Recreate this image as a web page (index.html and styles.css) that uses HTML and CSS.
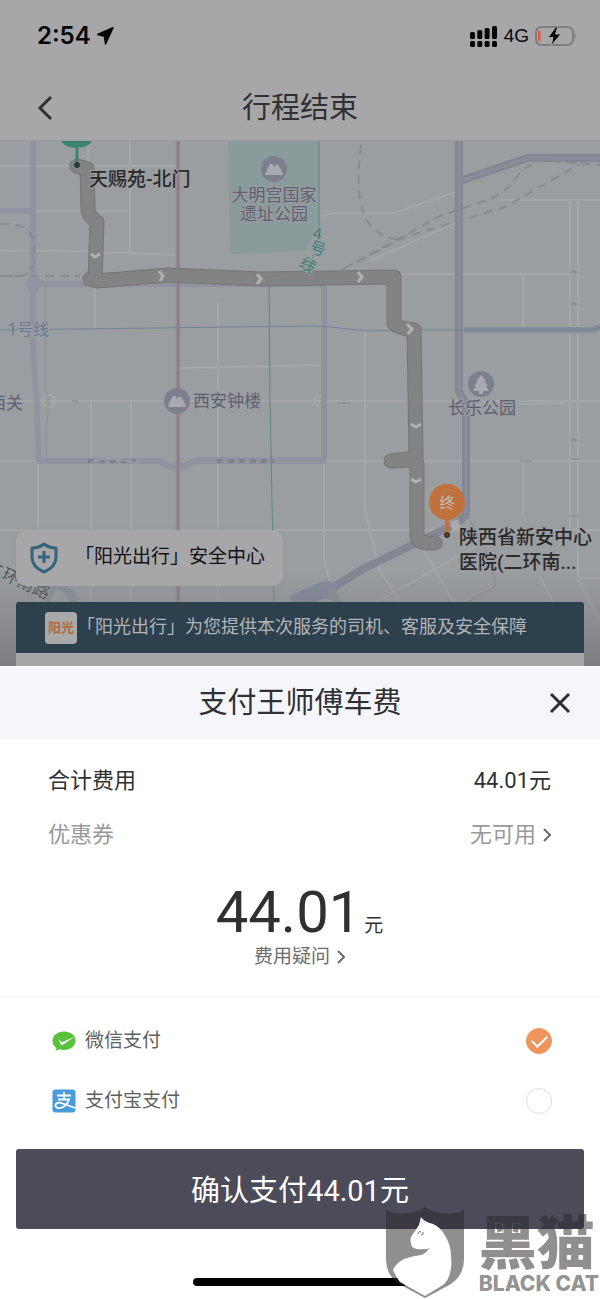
FILE: index.html
```html
<!DOCTYPE html>
<html lang="zh-CN">
<head>
<meta charset="utf-8">
<meta name="viewport" content="width=device-width, initial-scale=1">
<title>行程结束</title>
<link rel="stylesheet" href="styles.css">
</head>
<body>
<div class="screen">
  <header class="top">
    <div class="status">
      <div class="status-side">
        <span class="clock">2:54</span>
        <svg width="17" height="18" viewBox="0 0 17 18" aria-hidden="true"><path d="M16 .700 8.500 17 7.500 9.300.700 7.500Z" fill="#050506" stroke="#050506" stroke-width="1.500" stroke-linejoin="round"/></svg>
      </div>
      <div class="status-side">
        <svg width="28" height="21" viewBox="0 0 28 21" aria-hidden="true" fill="#050506"><rect x="0" y="6" width="5" height="7" rx="1.500"/><rect x="7.300" y="4" width="5" height="9" rx="1.500"/><rect x="14.600" y="2" width="5" height="11" rx="1.500"/><rect x="22" y="0" width="5" height="13" rx="1.500"/><rect x="0" y="15" width="5" height="6" rx="1.500"/><rect x="7.300" y="15" width="5" height="6" rx="1.500"/><rect x="14.600" y="15" width="5" height="6" rx="1.500"/><rect x="22" y="15" width="5" height="6" rx="1.500"/></svg>
        <span class="network">4G</span>
        <svg width="42" height="20" viewBox="0 0 42 20" aria-hidden="true"><rect x="1" y="1" width="37" height="18" rx="5" fill="none" stroke="#727275" stroke-width="1.500"/><path d="M39.500 7q2.500 3 0 6Z" fill="#727275"/><rect x="3" y="4.500" width="2.500" height="11" rx="1" fill="#e2573f"/><path d="M21.500 0 13 11.500h5L16 20l10-12h-5.500L23 0Z" fill="#050506" stroke="#a7a7a9" stroke-width="1"/></svg>
      </div>
    </div>
    <div class="nav">
      <button class="icon-button back" type="button" aria-label="返回"><svg width="16" height="26" viewBox="0 0 16 26"><path d="M14 2 3 13l11 11" fill="none" stroke="#303033" stroke-width="3"/></svg></button>
      <h1 class="title">行程结束</h1>
    </div>
  </header>

  <main class="map">
    <svg class="map-canvas" viewBox="0 140 600 525" preserveAspectRatio="xMidYMin slice" role="img" aria-label="行程路线地图">
      <defs>
        <linearGradient id="fade" x1="0" y1="0" x2="0" y2="1"><stop offset="0" stop-color="#7c7d81" stop-opacity="0"/><stop offset="1" stop-color="#7c7d81"/></linearGradient>
      </defs>
      <rect y="140" width="600" height="525" fill="#9b9ea1"/>
      <path d="M228 140h91v85l-14 25-75 3Z" fill="#8a9b9c"/>
      <g class="road-minor">
        <path d="M88 140v26M130 140v115M0 165h178M35 210h93M0 250q35-2 178 4M95 285v43M180 367l143-3M0 400h600M0 460h40M280 460h320M0 529h600M38 460v140M91 400v200M131 400v200M218 300v300M324 460v100l12 40M365 330v180l15 60 20 30M322 215l10-3h62l65-22M500 199h100M570 199v330M578 199v380l22 40M400 273h170M523 273v55M523 460v55M466 404l100-2M370 605l120-68M424 550l35 60M540 575l15 30M580 577h20M370 260l90-40"/>
        <circle cx="49" cy="400" r="6"/><circle cx="319" cy="400" r="5"/><path d="M218 370v-8M91 460v-12"/>
      </g>
      <path d="M570 271h9M570 303h9M570 439h9M570 458h9M570 515h9M338 402h12M520 460h12M72 400h6" stroke="#818388" stroke-width="1"/>
      <g class="road-major">
        <path d="M33 140v138q-2 60 3 112l3 70h120l14 7h8l14-7h129V283H36"/>
        <path d="M0 210h34"/>
      </g>
      <circle cx="33" cy="283" r="8" fill="#9295a1"/>
      <path d="M178 140v460" class="red-bed"/><circle cx="178" cy="466" r="5" fill="none" stroke="#9092a0" stroke-width="2"/>
      <path d="M178 140v460" class="red-line"/>
      <g class="ring"><path d="M45 283v105l3 8v18l-2 10v34h115l12 7h9l14-8h129V283"/><path d="M88 460h48M217 460h57" class="hatch"/></g>
      <path d="M90 462q12-8 48 0" fill="none" stroke="#a5a7ab"/>
      <g class="expressway">
        <path d="M460 180l68-23h72M459 140v250l7 14v108q-2 8-25 18l-78 38-75 46"/>
      </g>
      <path d="M318 582q8-4 20 1l-2 15h-14q-22 4-34 12l3-16Z" fill="#858a9b"/>
      <path d="M330 588l12 20M45 600l12-20 20 20" fill="none" stroke="#8b909b" stroke-width="8"/>
      <path d="M459 140v250l7 14v108M460 180l68-23h72" class="expressway-core"/>
      <path d="M466 512l20 38 9 30v6l-45 24" fill="none" stroke="#8a8598"/>
      <g class="rail">
        <path d="M0 223h10q22 2 24 20v20q-4 10-12 12H0M0 275h80"/>
        <path d="M361 144q-6 45 3 70 12 24 35 24M330 274q-4 1 15-7l55-30 40-22 53-18 15-10 14-18 18-10 60 5M345 267l60-31 60-18 40-12 75-43"/>
      </g>
      <path class="metro-one" d="M0 329l310-4q18 0 55 5l35-1h192l8-3"/>
      <path d="M464 329h128l8-3" fill="none" stroke="#858c99" stroke-width="6"/>
      <path class="metro-four" d="M319 140v85q-2 40-22 47l-28 13 1 115 4 200"/>
      <path class="metro-one" d="M464 329h128l8-3"/>

      <g class="route-edge"><path d="M77 165l10 3 1 41q2 8 9 12l-2 58"/><path d="M90 278l7 2 71-6 92 4 134-2v46q2 5 20 7l2 127q0 2-8 2l-17 2 22-1 4 4v72q1 8 18 7"/></g>
      <g class="route"><path d="M77 165l10 3 1 41q2 8 9 12l-2 58"/><path d="M90 278l7 2 71-6 92 4 134-2v46q2 5 20 7l2 127q0 2-8 2l-17 2 22-1 4 4v72q1 8 18 7"/></g>
      <g class="arrows"><path d="M91 253l4 3 5-3M159 270l4 5-3 5M257 273l4 5-4 5M358 271l4 5-4 5M407 323l5 5-4 5M411 423l5 3 5-3M411 478l5 3 5-3"/></g>

      <path d="M61 140a16 9 0 0 0 31 0Z" fill="#3b836f"/><path d="M77 147v15" stroke="#3b836f" stroke-width="3"/><circle cx="77" cy="164" r="2.500" fill="#333" stroke="#173f36"/>
      <path d="M450 521l8-3 3 9-8 5Z" fill="#aaa9ab"/>
      <circle cx="447" cy="501" r="18" fill="#bf713e"/><path d="M447 518v14" stroke="#bf713e" stroke-width="4"/><circle cx="447" cy="534" r="2.500" fill="#5b4030" stroke="#30201a"/>
      <text x="447" y="507" class="pin-text">终</text>

      <g fill="#7d7f8d"><circle cx="274" cy="168" r="13"/><circle cx="177" cy="400" r="13"/><circle cx="481" cy="383" r="13"/></g>
      <g fill="#a9aab0"><path d="M265 174q2-7 5-11 3-1 4 3l3-3q4 4 6 11Z"/><path d="M168 406q2-7 5-11 3-1 4 3l3-3q4 4 6 11Z"/><path d="M481 374l5 6h-2l4 5h-2l3 5h-6v3h-4v-3h-6l3-5h-2l4-5h-2Z"/></g>
      <g class="poi">
        <text x="274" y="200" text-anchor="middle">大明宫国家</text><text x="274" y="219" text-anchor="middle">遗址公园</text>
        <text x="193" y="406">西安钟楼</text><text x="482" y="413" text-anchor="middle">长乐公园</text><text x="-11" y="408">西关</text>
      </g>
      <text x="8" y="334" class="line-one">1号线</text>
      <g class="line-four"><text x="313" y="238" transform="rotate(8 318 233)">4</text><text x="310" y="253" transform="rotate(18 317 247)">号</text><text x="300" y="270" transform="rotate(35 308 264)">线</text></g>
      <text x="-15" y="570" transform="rotate(25 -15 570)" class="road-name">二环南路</text>
      <g class="place"><text x="89" y="185">天赐苑-北门</text><text x="459" y="543">陕西省新安中心</text><text x="459" y="568">医院(二环南...</text></g>
      <rect y="570" width="600" height="95" fill="url(#fade)"/>
    </svg>
    <button class="safety" type="button">
      <svg width="28" height="32" viewBox="0 0 28 32" aria-hidden="true"><path d="M14 2q5 4 12 4v9q0 10-12 15Q2 25 2 15V6q7 0 12-4Z" fill="none" stroke="#35637c" stroke-width="3" stroke-linejoin="round"/><path d="M14 9v12M8 15h12" stroke="#35637c" stroke-width="3"/></svg>
      <span>「阳光出行」安全中心</span>
    </button>
    <section class="service">
      <div class="service-bar">
        <span class="brand">阳光</span>
        <span class="service-text">「阳光出行」为您提供本次服务的司机、客服及安全保障</span>
      </div>
      <div class="service-body"></div>
    </section>
  </main>

  <form class="sheet">
    <div class="sheet-head">
      <h2 class="title">支付王师傅车费</h2>
      <button class="icon-button close" type="button" aria-label="关闭"><svg width="22" height="22" viewBox="0 0 22 22"><path d="M2 2l18 18M20 2 2 20" stroke="#303032" stroke-width="3"/></svg></button>
    </div>
    <div class="bill">
      <div class="bill-row"><span>合计费用</span><span>44.01元</span></div>
      <div class="bill-row muted"><span>优惠券</span><a class="more" href="#coupon">无可用<svg width="8" height="14" viewBox="0 0 8 14" aria-hidden="true"><path d="M1 1l6 6-6 6" class="chevron"/></svg></a></div>
      <div class="amount"><span class="amount-value">44.01</span><span class="amount-unit">元</span></div>
      <a class="more question" href="#fee">费用疑问<svg width="8" height="14" viewBox="0 0 8 14" aria-hidden="true"><path d="M1 1l6 6-6 6" class="chevron"/></svg></a>
    </div>
    <div class="methods">
      <label class="method">
        <svg width="24" height="24" viewBox="0 0 24 24" aria-hidden="true"><path d="M12 2.500C5.500 2.500.500 6.500.500 12c0 3 1.500 5.500 4 7l-1 3 4-1.800c1.500.500 3 .800 4.500.800 6.500 0 11.500-4 11.500-9.500S18.500 2.500 12 2.500Z" fill="#58c33a"/><path d="M6.500 10.500l3.500 2.800L23 7.500 10.500 16q-1 .500-1.500-.500Z" fill="#fff"/></svg>
        <span>微信支付</span><input class="radio" type="radio" name="method" checked>
      </label>
      <label class="method">
        <svg width="24" height="24" viewBox="0 0 24 24" aria-hidden="true"><rect x=".500" y=".500" width="23" height="23" rx="3" fill="#4a9bdc"/><path d="M5 6.500h14M12 3v7.500M6 10.500h11q-2 6-7 8c-4 1.500-7 0-6.500-2.500.500-2.500 4-3 7-1.500L23.500 19" fill="none" stroke="#fff" stroke-width="1.800"/></svg>
        <span>支付宝支付</span><input class="radio" type="radio" name="method">
      </label>
    </div>
    <button class="pay" type="button">确认支付44.01元</button>
    <div class="home"></div>
    <div class="watermark">
      <svg width="78" height="92" viewBox="0 0 78 92" aria-hidden="true"><path d="M0 3q10 5 19 3Q29 7 39 0q10 7 20 6 10 2 19-3v49q0 16-13 25L39 91 13 77Q0 68 0 52Z" fill="#2b2728" fill-opacity=".52"/><path d="M35 10q3 5 12 7 7 3 11 10 7 10 7 22 1 12-1 17-2 8-7 12L39 89 14 75q-4-5-7-12 2-6 11-11 8-3 17-4 6-2 8-7-3 2-6 1-6 1-9-1-3-1-3-5-1-3 0-6l8-12Z" fill="#fff"/><path d="M32 27q1-4 3-2M35 28q3 0 2-3" fill="none" stroke="#777" stroke-width="1"/></svg>
      <div class="watermark-words"><span class="watermark-cn">黑猫</span><span class="watermark-en">BLACK CAT</span></div>
    </div>
  </form>
</div>
</body>
</html>
```
FILE: styles.css
```css
* { box-sizing: border-box; }
body { margin: 0; font-family: Roboto, "Noto Sans CJK SC", sans-serif; color: #303032; background: #fff; }
button, input { font: inherit; color: inherit; }
button { border: 0; padding: 0; cursor: pointer; }
a { color: inherit; text-decoration: none; }
h1, h2 { margin: 0; }
svg { flex: none; display: block; }
.screen { display: flex; flex-direction: column; min-height: 100vh; overflow: hidden; }

.top { background: #a7a7a9; border-bottom: 1px solid #9b9b9e; }
.status { display: flex; justify-content: space-between; align-items: center; height: 72px; padding: 0 23px 0 37px; }
.status-side { display: flex; align-items: center; gap: 6px; }
.clock { font: 600 24px/28px Inter, sans-serif; color: #050506; }
.network { font: 19px/24px "Liberation Sans", sans-serif; color: #050506; }
.nav { display: grid; grid-template-columns: 60px 1fr 60px; align-items: center; height: 68px; padding-top: 3px; }
.icon-button { display: grid; place-items: center; height: 44px; background: none; }
.back { padding-left: 30px; }
.title { font-size: 29px; font-weight: 400; line-height: 40px; text-align: center; }

.map { position: relative; flex: 1 0 auto; min-height: 520px; display: flex; flex-direction: column; justify-content: flex-end; align-items: flex-start; gap: 16px; padding: 0 16px; background: #9b9ea1; }
.map-canvas { position: absolute; inset: 0; width: 100%; height: 100%; }
.road-minor { fill: none; stroke: #a4a6a9; stroke-width: 2; }
.road-major { fill: none; stroke: #9194a0; stroke-width: 6; stroke-linejoin: round; }
.ring { fill: none; stroke: #8a8ea0; stroke-width: 1; }
.hatch { stroke: #7f828b; stroke-width: 4; stroke-dasharray: 6 5; }
.red-bed { stroke: #948f9a; stroke-width: 5; }
.red-line { stroke: #937781; stroke-width: 2; }
.expressway { fill: none; stroke: #858694; stroke-width: 8; stroke-linejoin: round; }
.expressway-core { fill: none; stroke: #8c8d9b; stroke-width: 3; }
.rail { fill: none; stroke: #898b8f; stroke-width: 2; stroke-dasharray: 9 6; }
.metro-one { fill: none; stroke: #718399; stroke-width: 1; }
.metro-four { fill: none; stroke: #568a7f; stroke-width: 1; }
.route, .route-edge { fill: none; stroke: #838285; stroke-width: 13; stroke-linecap: round; stroke-linejoin: round; }
.route-edge { stroke: #757477; stroke-width: 15; }
.arrows { fill: none; stroke: #b0b0b2; stroke-width: 3; }
.poi { font-size: 17px; fill: #5d6070; }
.poi, .place, .line-one, .line-four, .road-name { paint-order: stroke; stroke: #9b9ea1; stroke-width: 2px; }
.line-one { font-size: 16px; fill: #667b93; }
.line-four { font-size: 16px; fill: #427e78; }
.road-name { font-size: 17px; fill: #505258; }
.place { font-size: 19px; font-weight: 500; fill: #29292c; }
.pin-text { font-size: 15px; fill: #c4bfbd; text-anchor: middle; }

.safety { position: relative; display: flex; align-items: center; gap: 17px; height: 56px; padding: 0 18px 0 14px; border-radius: 10px; background: #a7a7a9; color: #111; font-size: 19px; line-height: 26px; box-shadow: 0 1px 4px #8e909466; }
.safety span { padding-bottom: 2px; }
.service { position: relative; width: 100%; }
.service-bar { display: flex; align-items: center; height: 51px; padding-left: 29px; border-radius: 3px 3px 0 0; background: #2d404d; color: #b2b5b9; white-space: nowrap; }
.brand { flex: none; width: 32px; height: 32px; border-radius: 4px; background: #aaa9a9; color: #b2683c; font-size: 13px; font-weight: 700; line-height: 32px; text-align: center; }
.service-text { font-size: 18px; line-height: 24px; padding-bottom: 1px; }
.service-body { height: 13px; background: #a7a7a9; }

.sheet { position: relative; background: #fff; padding-bottom: 13px; border-top: 1px solid #fff; }
.sheet-head { display: grid; grid-template-columns: 80px 1fr 80px; align-items: center; height: 72px; background: #f5f6fb; }
.sheet-head .title { grid-column: 2; }
.bill { display: flex; flex-direction: column; padding: 15px 49px 26px 48px; border-bottom: 1px solid #f5f5f6; }
.bill-row { display: flex; justify-content: space-between; align-items: center; height: 54px; font-size: 22px; line-height: 32px; }
.muted { color: #99999b; }
.more { display: flex; align-items: center; gap: 7px; }
.chevron { fill: none; stroke: #6c6c6e; stroke-width: 2; }
.amount { display: flex; justify-content: center; align-items: baseline; gap: 3px; height: 82px; padding-top: 18px; line-height: 64px; }
.amount-value { font-size: 58px; }
.amount-unit { font-size: 19px; }
.question { align-self: center; font-size: 19px; line-height: 26px; color: #6c6c6e; }
.methods { padding: 14px 48px 18px 52px; }
.method { display: flex; align-items: center; gap: 9px; height: 60px; font-size: 19px; line-height: 26px; color: #606063; cursor: pointer; }
.radio { appearance: none; display: grid; place-items: center; width: 26px; height: 26px; margin: 0 0 0 auto; border: 1px solid #ddd; border-radius: 50%; }
.radio:checked { background: #ee945c; border-color: #ee945c; }
.radio:checked::before { content: ""; width: 13px; height: 7px; border: solid #fff; border-width: 0 0 2px 2px; transform: translateY(-2px) rotate(-45deg); }
.pay { display: block; width: calc(100% - 32px); height: 80px; margin: 0 16px; padding-bottom: 3px; border-radius: 3px; background: #4b4b5a; color: #fff; font-size: 29px; }
.home { width: 214px; height: 8px; margin: 49px auto 0; border-radius: 4px; background: #000; }
.watermark { position: absolute; right: 1px; bottom: 0; display: flex; align-items: flex-start; gap: 15px; pointer-events: none; }
.watermark-words { display: flex; flex-direction: column; color: #2b272885; white-space: nowrap; }
.watermark-cn { font: 900 58px/64px "Noto Sans CJK SC", sans-serif; }
.watermark-en { font: 800 21px/26px Inter, sans-serif; }
```
